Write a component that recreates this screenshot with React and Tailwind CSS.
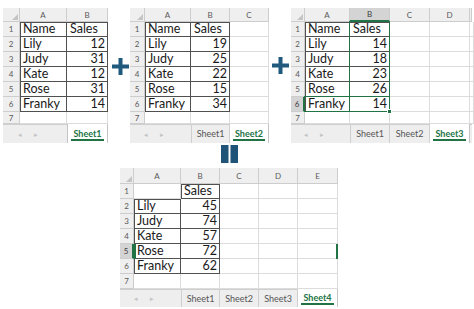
import React from "react";

function Plus() {
  return (
    <svg width="17" height="17" viewBox="0 0 17 17">
      <rect x="6.5" y="0" width="4" height="17" fill="#1f5a7e" />
      <rect x="0" y="6.5" width="17" height="4" fill="#1f5a7e" />
    </svg>
  );
}

function Equals() {
  return (
    <svg width="17" height="18" viewBox="0 0 17 18">
      <rect x="0" y="0" width="7.5" height="18" fill="#1f5377" />
      <rect x="9.5" y="0" width="7.5" height="18" fill="#1f5377" />
    </svg>
  );
}

function Corner() {
  return (
    <div className="relative bg-[#efefef] border-r border-b border-[#cdcdcd]">
      <svg className="absolute right-[1px] bottom-[1px]" width="6" height="6" viewBox="0 0 6 6">
        <polygon points="6,0 6,6 0,6" fill="#c4c4c4" />
      </svg>
    </div>
  );
}

function Sheet({
  gridCls,
  width,
  cols,
  headerH,
  row7H,
  tabH,
  data,
  bordered,
  tabs,
  activeTab,
  hlCol,
  hlRow,
  arrowPad,
  children,
}) {
  const isB = (r, c) => r >= 1 && r <= 6 && c >= 0 && bordered(r, c);
  const cells = [];
  cells.push(<Corner key="corner" />);
  cols.forEach((label, i) => {
    const hl = hlCol === i;
    cells.push(
      <div
        key={"h" + i}
        className={
          hl
            ? "flex items-center justify-center bg-[#d4d4d4] border-r border-b-2 border-r-[#cdcdcd] border-b-[#217346] text-[8px] text-[#3d3d3d] leading-none"
            : "flex items-center justify-center bg-[#efefef] border-r border-b border-[#cdcdcd] text-[8px] text-[#5a5a5a] leading-none"
        }
      >
        {label}
      </div>
    );
  });
  for (let r = 1; r <= 7; r++) {
    const rowH = r === 7 ? row7H : "h-[15px]";
    const hl = hlRow === r;
    cells.push(
      <div
        key={"r" + r}
        className={
          hl
            ? `${rowH} flex items-center justify-center bg-[#d4d4d4] border-r-2 border-b border-r-[#217346] border-b-[#cdcdcd] text-[8px] text-[#3d3d3d] leading-none`
            : `${rowH} flex items-center justify-center bg-[#efefef] border-r border-b border-[#cdcdcd] text-[8px] text-[#5a5a5a] leading-none`
        }
      >
        {r}
      </div>
    );
    cols.forEach((_, c) => {
      const v = data[r - 1] ? data[r - 1][c] : undefined;
      const bd = isB(r, c);
      const topS = bd && !isB(r - 1, c);
      const leftS = bd && !isB(r, c - 1);
      let shadow = "";
      if (topS && leftS) shadow = "shadow-[inset_1px_1px_0_#505050]";
      else if (topS) shadow = "shadow-[inset_0_1px_0_#505050]";
      else if (leftS) shadow = "shadow-[inset_1px_0_0_#505050]";
      const num = typeof v === "number";
      cells.push(
        <div
          key={"c" + r + "-" + c}
          className={`${rowH} ${shadow} flex items-center ${
            num ? "justify-end pr-[2px]" : "justify-start pl-[3px]"
          } text-[12.5px] text-[#1a1a1a] leading-none border-r border-b ${
            bd ? "border-[#505050]" : "border-[#dcdcdc]"
          } whitespace-nowrap overflow-hidden`}
        >
          {v === undefined || v === "" ? null : v}
        </div>
      );
    });
  }

  const tabCells = [];
  tabCells.push(
    <div
      key="arrows"
      className={`col-span-2 flex items-center ${arrowPad} gap-[12px] text-[7px] text-[#c4c4c4] leading-none border-t border-[#cfcfcf]`}
    >
      <span>◂</span>
      <span>▸</span>
    </div>
  );
  cols.slice(1).forEach((_, i) => {
    const t = tabs[i];
    if (!t) {
      tabCells.push(<div key={"t" + i} className="border-t border-[#cfcfcf]" />);
    } else if (t === activeTab) {
      tabCells.push(
        <div
          key={"t" + i}
          className={`relative flex items-center justify-center bg-white text-[9px] font-bold text-[#217346] leading-none border-r border-[#c4c4c4] ${
            i === 0 ? "border-l" : ""
          }`}
        >
          <span className="-mt-[1px]">{t}</span>
          <span className="absolute left-[3px] right-[3px] bottom-[2px] h-[2px] bg-[#217346]" />
        </div>
      );
    } else {
      tabCells.push(
        <div
          key={"t" + i}
          className={`flex items-center justify-center text-[9px] text-[#555555] leading-none border-t border-r border-[#cfcfcf] ${
            i === 0 ? "border-l" : ""
          }`}
        >
          <span className="-mt-[1px]">{t}</span>
        </div>
      );
    }
  });

  return (
    <div className={`relative flex flex-col bg-white ${width}`}>
      <div className={`grid ${gridCls} ${headerH}`}>{cells.slice(0, cols.length + 1)}</div>
      <div className={`grid ${gridCls}`}>{cells.slice(cols.length + 1)}</div>
      <div className={`grid ${gridCls} ${tabH} bg-[#eeeeee]`}>{tabCells}</div>
      {children}
    </div>
  );
}

const d1 = [
  ["Name", "Sales"],
  ["Lily", 12],
  ["Judy", 31],
  ["Kate", 12],
  ["Rose", 31],
  ["Franky", 14],
];
const d2 = [
  ["Name", "Sales"],
  ["Lily", 19],
  ["Judy", 25],
  ["Kate", 22],
  ["Rose", 15],
  ["Franky", 34],
];
const d3 = [
  ["Name", "Sales"],
  ["Lily", 14],
  ["Judy", 18],
  ["Kate", 23],
  ["Rose", 26],
  ["Franky", 14],
];
const d4 = [
  ["", "Sales"],
  ["Lily", 45],
  ["Judy", 74],
  ["Kate", 57],
  ["Rose", 72],
  ["Franky", 62],
];

const allAB = (r, c) => c <= 1;
const sheet4B = (r, c) => (r === 1 ? c === 1 : c <= 1);

export default function App() {
  return (
    <div className="w-[474px] h-[309px] bg-white overflow-hidden [font-family:Lato,'Liberation_Sans',sans-serif]">
      <div className="flex items-start pt-[8px] pl-[3px]">
        <Sheet
          gridCls="grid-cols-[17px_47px_41px]"
          width="w-[105px]"
          cols={["A", "B"]}
          headerH="h-[14px]"
          row7H="h-[12px]"
          tabH="h-[19px]"
          data={d1}
          bordered={allAB}
          tabs={["Sheet1"]}
          activeTab="Sheet1"
          arrowPad="pl-[15px]"
        />
        <div className="mt-[50px] ml-[4px] mr-[1px]">
          <Plus />
        </div>
        <Sheet
          gridCls="grid-cols-[15px_46px_39px_39px]"
          width="w-[139px]"
          cols={["A", "B", "C"]}
          headerH="h-[14px]"
          row7H="h-[12px]"
          tabH="h-[19px]"
          data={d2}
          bordered={allAB}
          tabs={["Sheet1", "Sheet2"]}
          activeTab="Sheet2"
          arrowPad="pl-[14px]"
        />
        <div className="mt-[49px] ml-[3px] mr-[2px]">
          <Plus />
        </div>
        <Sheet
          gridCls="grid-cols-[14px_45px_40px_40px_40px_2px]"
          width="w-[181px]"
          cols={["A", "B", "C", "D", ""]}
          headerH="h-[14px]"
          row7H="h-[12px]"
          tabH="h-[19px]"
          data={d3}
          bordered={allAB}
          tabs={["Sheet1", "Sheet2", "Sheet3"]}
          activeTab="Sheet3"
          hlCol={1}
          hlRow={6}
          arrowPad="pl-[13px]"
        >
          <div className="absolute left-[58px] top-[13px] w-[41px] h-[91px] border border-[#217346]" />
          <div className="absolute left-[13px] top-[88px] w-[86px] h-[16px] border border-[#217346]" />
          <div className="absolute left-[96px] top-[101px] w-[5px] h-[5px] bg-[#217346] border border-white" />
        </Sheet>
      </div>
      <div className="flex flex-col items-center w-[218px] ml-[120px] mt-[2px]">
        <Equals />
        <div className="mt-[5px]">
          <Sheet
            gridCls="grid-cols-[14px_47px_39px_39px_39px_40px]"
            width="w-[218px]"
            cols={["A", "B", "C", "D", "E"]}
            headerH="h-[16px]"
            row7H="h-[15px]"
            tabH="h-[18px]"
            data={d4}
            bordered={sheet4B}
            tabs={["Sheet1", "Sheet2", "Sheet3", "Sheet4"]}
            activeTab="Sheet4"
            hlRow={5}
            arrowPad="pl-[14px]"
          >
            <div className="absolute left-[14px] top-[76px] w-[2px] h-[15px] bg-[#217346]" />
            <div className="absolute right-[0px] top-[76px] w-[2px] h-[15px] bg-[#217346]" />
          </Sheet>
        </div>
      </div>
    </div>
  );
}
